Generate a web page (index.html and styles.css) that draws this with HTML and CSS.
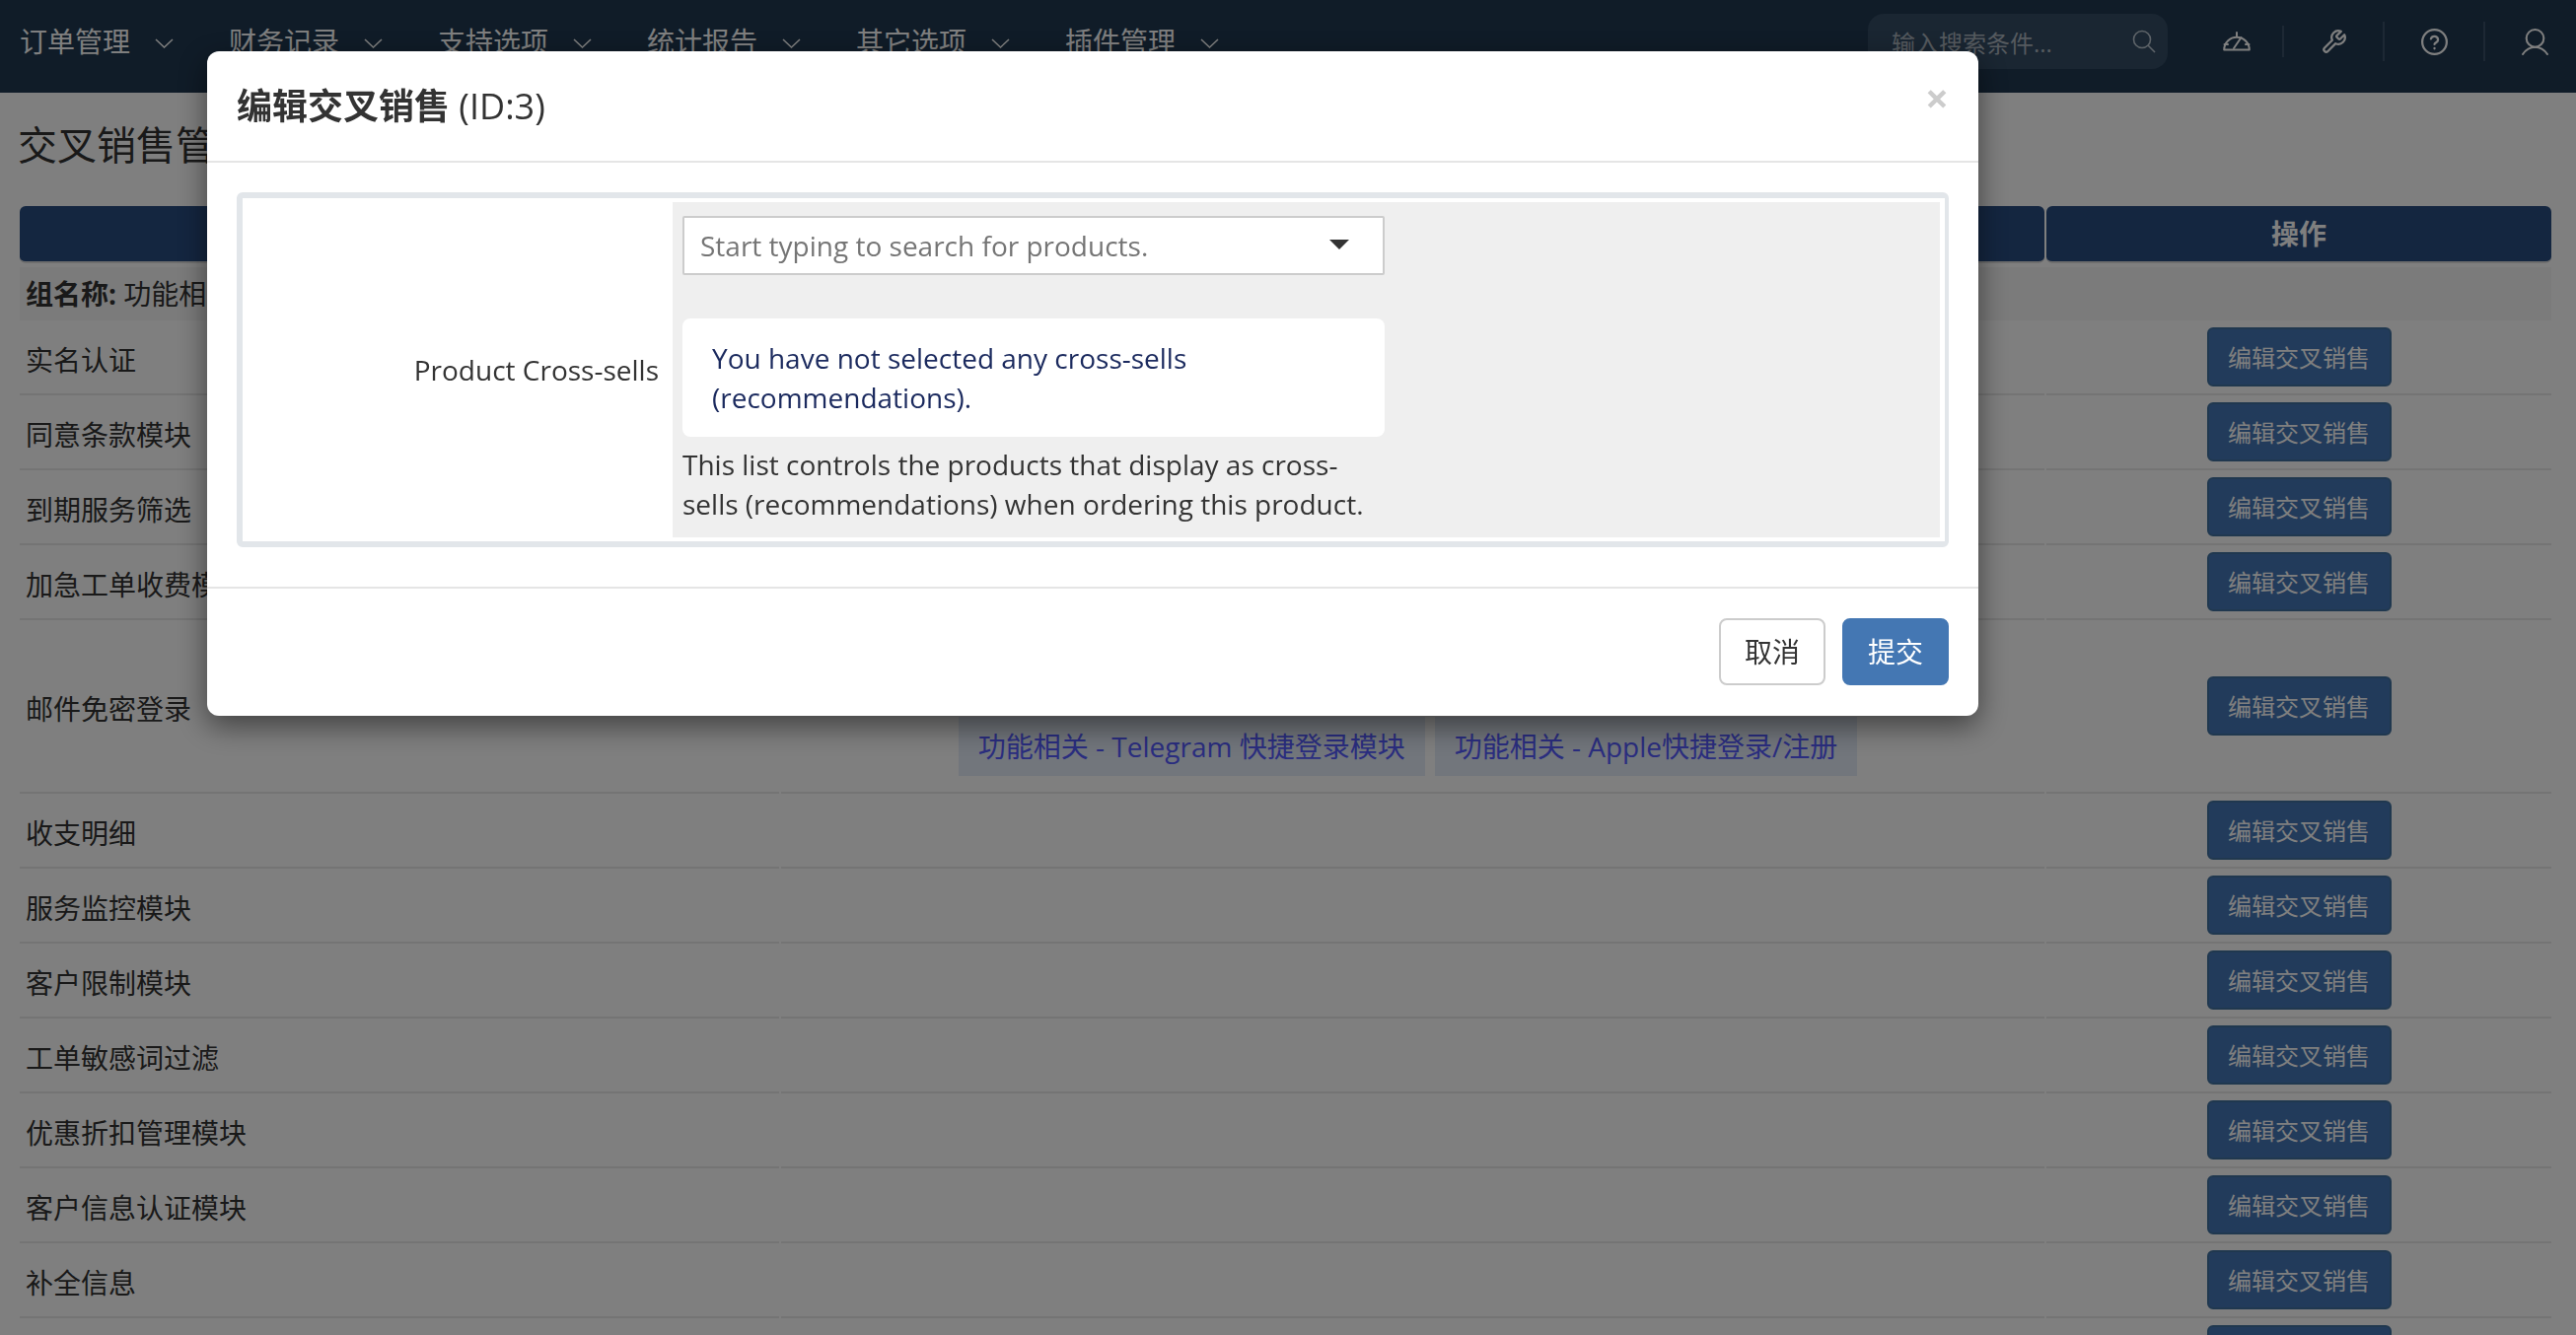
FILE: index.html
```html
<!DOCTYPE html>
<html lang="zh-CN">

<head>
  <meta charset="UTF-8" />
  <title>交叉销售管理</title>
  <link rel="stylesheet" href="styles.css">
</head>

<body>
  <nav class="topbar">
    <div class="menu-item"><span>订单管理</span><svg class="chevron" viewBox="0 0 19 10"><path d="M1 1l8.500 8 8.500-8" /></svg></div>
    <div class="menu-item"><span>财务记录</span><svg class="chevron" viewBox="0 0 19 10"><path d="M1 1l8.500 8 8.500-8" /></svg></div>
    <div class="menu-item"><span>支持选项</span><svg class="chevron" viewBox="0 0 19 10"><path d="M1 1l8.500 8 8.500-8" /></svg></div>
    <div class="menu-item"><span>统计报告</span><svg class="chevron" viewBox="0 0 19 10"><path d="M1 1l8.500 8 8.500-8" /></svg></div>
    <div class="menu-item"><span>其它选项</span><svg class="chevron" viewBox="0 0 19 10"><path d="M1 1l8.500 8 8.500-8" /></svg></div>
    <div class="menu-item"><span>插件管理</span><svg class="chevron" viewBox="0 0 19 10"><path d="M1 1l8.500 8 8.500-8" /></svg></div>

    <div class="search">
      <span>输入搜索条件...</span>
      <svg class="search-icon" viewBox="0 0 24 24"><circle cx="10" cy="10" r="8.500" /><path d="M16 16l7 7" /></svg>
    </div>

    <div class="tool tool-short">
      <svg class="tool-icon-wide" viewBox="0 0 28 20"><path d="M1.200 18.500a12.800 12.800 0 0 1 25.600 0z" /><path d="M14 1v3.500M1.500 13h3.500M23 13h3.500M11 17l7.500-11" /></svg>
    </div>
    <div class="tool">
      <svg class="tool-icon" viewBox="0 0 24 24"><path d="M14.700 6.300a1 1 0 0 0 0 1.400l1.600 1.600a1 1 0 0 0 1.400 0l3.770-3.770a6 6 0 0 1-7.940 7.940l-6.910 6.910a2.120 2.120 0 0 1-3-3l6.910-6.910a6 6 0 0 1 7.940-7.940l-3.760 3.760z" /></svg>
    </div>
    <div class="tool">
      <svg class="tool-icon" viewBox="0 0 24 24"><circle cx="12" cy="12" r="11" /><path d="M8.800 9.200a3.300 3.300 0 0 1 6.400 1c0 2.200-3.200 2.600-3.200 4" /><path d="M12 17.600v.4" /></svg>
    </div>
    <div class="tool tool-last">
      <svg class="tool-icon" viewBox="0 0 26 26"><circle cx="13" cy="9.500" r="8.500" /><path d="M1 25c3-4.500 7-7 12-7s9 2.500 12 7" /></svg>
    </div>
  </nav>

  <main class="page">
    <h1 class="page-title">交叉销售管理</h1>

    <div class="table-head">
      <div class="head-cell">产品名称</div>
      <div class="head-cell">交叉销售产品</div>
      <div class="head-cell">操作</div>
    </div>

    <div class="group-row"><b>组名称:</b> 功能相关</div>

    <div class="row"><div class="cell">实名认证</div><div class="cell"></div><div class="cell cell-action"><a class="btn-edit">编辑交叉销售</a></div></div>
    <div class="row"><div class="cell">同意条款模块</div><div class="cell"></div><div class="cell cell-action"><a class="btn-edit">编辑交叉销售</a></div></div>
    <div class="row"><div class="cell">到期服务筛选</div><div class="cell"></div><div class="cell cell-action"><a class="btn-edit">编辑交叉销售</a></div></div>
    <div class="row"><div class="cell">加急工单收费模块</div><div class="cell"></div><div class="cell cell-action"><a class="btn-edit">编辑交叉销售</a></div></div>
    <div class="row">
      <div class="cell">邮件免密登录</div>
      <div class="cell cell-tags">
        <div class="tag-line"><a class="tag">功能相关 - 实名认证</a></div>
        <div class="tag-line"><a class="tag">功能相关 - Telegram 快捷登录模块</a><a class="tag">功能相关 - Apple快捷登录/注册</a></div>
      </div>
      <div class="cell cell-action"><a class="btn-edit">编辑交叉销售</a></div>
    </div>
    <div class="row"><div class="cell">收支明细</div><div class="cell"></div><div class="cell cell-action"><a class="btn-edit">编辑交叉销售</a></div></div>
    <div class="row"><div class="cell">服务监控模块</div><div class="cell"></div><div class="cell cell-action"><a class="btn-edit">编辑交叉销售</a></div></div>
    <div class="row"><div class="cell">客户限制模块</div><div class="cell"></div><div class="cell cell-action"><a class="btn-edit">编辑交叉销售</a></div></div>
    <div class="row"><div class="cell">工单敏感词过滤</div><div class="cell"></div><div class="cell cell-action"><a class="btn-edit">编辑交叉销售</a></div></div>
    <div class="row"><div class="cell">优惠折扣管理模块</div><div class="cell"></div><div class="cell cell-action"><a class="btn-edit">编辑交叉销售</a></div></div>
    <div class="row"><div class="cell">客户信息认证模块</div><div class="cell"></div><div class="cell cell-action"><a class="btn-edit">编辑交叉销售</a></div></div>
    <div class="row"><div class="cell">补全信息</div><div class="cell"></div><div class="cell cell-action"><a class="btn-edit">编辑交叉销售</a></div></div>
    <div class="row"><div class="cell"></div><div class="cell"></div><div class="cell cell-action"><a class="btn-edit"></a></div></div>
  </main>

  <div class="backdrop"></div>

  <div class="modal">
    <div class="modal-header">
      <h2 class="modal-title">编辑交叉销售 <span class="modal-id">(ID:3)</span></h2>
      <span class="close">×</span>
    </div>
    <div class="modal-body">
      <div class="form-panel">
        <div class="field-label">Product Cross-sells</div>
        <div class="field-area">
          <div class="select-box">
            <span>Start typing to search for products.</span>
            <i class="caret"></i>
          </div>
          <div class="notice">You have not selected any cross-sells (recommendations).</div>
          <div class="help">This list controls the products that display as cross-sells (recommendations) when ordering this product.</div>
        </div>
      </div>
    </div>
    <div class="modal-footer">
      <a class="btn btn-cancel">取消</a>
      <a class="btn btn-submit">提交</a>
    </div>
  </div>
</body>

</html>
```

FILE: styles.css
```css
* {
  margin: 0;
  padding: 0;
  box-sizing: border-box;
}

html, body {
  width: 100%;
  height: 100%;
  overflow: hidden;
  background: #fff;
  color: #333;
  font-family: "Open Sans", "Noto Sans CJK SC", sans-serif;
  font-size: 28px;
}

.topbar {
  display: flex;
  align-items: center;
  height: 94px;
  padding: 0 0 10px 20px;
  background: #203850;
  color: #fff;
}

.menu-item {
  display: flex;
  align-items: center;
  gap: 25px;
  margin-right: 56px;
  padding-bottom: 2px;
}

.chevron {
  width: 19px;
  height: 10px;
  margin-top: 6px;
  fill: none;
  stroke: #fff;
  stroke-width: 1.500;
}

.search {
  display: flex;
  align-items: center;
  justify-content: space-between;
  width: 304px;
  height: 56px;
  margin-left: auto;
  margin-right: 16px;
  padding: 0 12px 0 24px;
  border-radius: 16px;
  background: #344c64;
  color: #aab4be;
  font-size: 24px;
}

.search-icon {
  width: 24px;
  height: 24px;
  fill: none;
  stroke: #bcc8d2;
  stroke-width: 1.600;
}

.tool {
  display: flex;
  align-items: center;
  justify-content: center;
  width: 102px;
  height: 40px;
  border-right: 2px solid #3a5068;
}

.tool-short {
  height: 32px;
  padding-left: 8px;
}

.tool-last {
  width: 92px;
  padding-left: 8px;
  border-right: 0;
}

.tool-icon {
  width: 27px;
  height: 27px;
  fill: none;
  stroke: #fff;
  stroke-width: 2;
  stroke-linecap: round;
  stroke-linejoin: round;
}

.tool-icon-wide {
  width: 28px;
  height: 20px;
  fill: none;
  stroke: #fff;
  stroke-width: 2;
  stroke-linecap: round;
  stroke-linejoin: round;
}

.page {
  padding: 25px 25px 0 20px;
}

.page-title {
  height: 56px;
  margin: 0 0 34px -2px;
  font-size: 40px;
  font-weight: 400;
  line-height: 56px;
}

.table-head,
.row {
  display: grid;
  grid-template-columns: 770px 1281px 512px;
  gap: 2px;
}

.table-head {
  margin-bottom: 4px;
}

.head-cell {
  height: 58px;
  border-bottom: 2px solid #ddd;
  border-radius: 6px;
  background: #284c80;
  color: #fff;
  font-weight: 700;
  line-height: 57px;
  text-align: center;
}

.group-row {
  height: 54px;
  padding-left: 6px;
  background: #f6f6f6;
  line-height: 54px;
}

.cell {
  display: flex;
  align-items: center;
  min-height: 76px;
  padding: 3px 0 0 6px;
  border-bottom: 2px solid #e8e8e8;
}

.cell-action {
  justify-content: center;
  padding: 0;
}

.cell-tags {
  flex-direction: column;
  gap: 6px;
  padding: 32px 0 16px;
}

.tag-line {
  display: flex;
  justify-content: center;
}

.tag {
  height: 60px;
  margin-right: 10px;
  padding: 0 20px;
  background: #e4ecf8;
  color: #555bff;
  line-height: 60px;
  white-space: nowrap;
}

.btn-edit {
  display: block;
  width: 187px;
  height: 60px;
  border: 2px solid #41719f;
  border-radius: 6px;
  background: #4476b6;
  color: #fff;
  font-size: 24px;
  line-height: 57px;
  text-align: center;
}

.backdrop {
  position: fixed;
  top: 0;
  left: 0;
  width: 100%;
  height: 100%;
  background: rgba(0, 0, 0, 0.5);
}

.modal {
  position: fixed;
  top: 52px;
  left: 210px;
  width: 1796px;
  border-radius: 12px;
  background: #fff;
  box-shadow: 0 10px 30px rgba(0, 0, 0, 0.5);
}

.modal-header {
  display: flex;
  align-items: center;
  justify-content: space-between;
  height: 113px;
  padding: 0 30px 5px;
  border-bottom: 2px solid #e5e5e5;
}

.modal-title {
  font-size: 36px;
  font-weight: 700;
}

.modal-id {
  font-weight: 400;
}

.close {
  margin: -12px 0 0;
  color: #ccc;
  font-size: 42px;
  font-weight: 700;
  line-height: 1;
}

.modal-body {
  padding: 30px 30px 40px;
}

.form-panel {
  display: grid;
  grid-template-columns: 436px 1fr;
  height: 360px;
  padding: 4px 5px 4px 0;
  border: 6px solid #e2e6ea;
  border-right-width: 4px;
  border-radius: 6px;
}

.field-label {
  display: flex;
  align-items: center;
  justify-content: flex-end;
  padding-right: 14px;
}

.field-area {
  padding: 14px 10px;
  background: #efefef;
}

.select-box {
  display: flex;
  align-items: center;
  justify-content: space-between;
  width: 712px;
  height: 60px;
  padding: 0 34px 0 16px;
  border: 2px solid #ccc;
  border-radius: 2px;
  background: #fff;
  color: #757575;
}

.caret {
  width: 0;
  height: 0;
  margin-top: -2px;
  border-top: 10px solid #333;
  border-left: 10px solid transparent;
  border-right: 10px solid transparent;
}

.notice {
  width: 712px;
  height: 120px;
  margin-top: 44px;
  padding: 20px 30px;
  border-radius: 8px;
  background: #fff;
  color: #1b2a5e;
  line-height: 40px;
}

.help {
  width: 712px;
  margin-top: 8px;
  line-height: 40px;
}

.modal-footer {
  display: flex;
  justify-content: flex-end;
  gap: 17px;
  padding: 30px 30px 31px;
  border-top: 2px solid #e5e5e5;
}

.btn {
  width: 108px;
  height: 68px;
  border: 2px solid #ccc;
  border-radius: 8px;
  line-height: 64px;
  text-align: center;
}

.btn-submit {
  border-color: #4477b3;
  background: #4477b3;
  color: #fff;
}
```
